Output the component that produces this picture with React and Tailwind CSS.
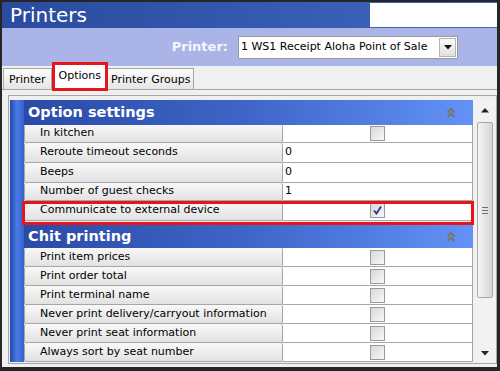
import React from 'react';

const optionRows = [
  { label: 'In kitchen', type: 'check', h: 'h-[18px]' },
  { label: 'Reroute timeout seconds', type: 'text', value: '0', h: 'h-[20px]' },
  { label: 'Beeps', type: 'text', value: '0', h: 'h-[20px]' },
  { label: 'Number of guest checks', type: 'text', value: '1', h: 'h-[18px]' },
];

const chitRows = [
  'Print item prices',
  'Print order total',
  'Print terminal name',
  'Never print delivery/carryout information',
  'Never print seat information',
  'Always sort by seat number',
];

const CheckBox = ({ checked }) => (
  <div className="w-[15px] h-[15px] border border-[#9a9a9a] bg-gradient-to-br from-[#d8d8d8] to-[#f8f8f8] flex items-center justify-center">
    {checked && (
      <svg width="11" height="11" viewBox="0 0 11 11">
        <path d="M2 5.5 L4.5 8.5 L9 1.5" fill="none" stroke="#23358f" strokeWidth="1.8" />
      </svg>
    )}
  </div>
);

const Row = ({ label, type, value, h }) => (
  <div className={`flex ${h}`}>
    <div className="w-[259px] flex items-center pl-[15px] bg-gradient-to-b from-[#f8f8f8] to-[#e2e2e2] border-b border-r border-l border-[#a6a6a6] rounded-[2px] text-[11px] text-black">
      {label}
    </div>
    <div className="flex-1 flex items-center bg-white border-b border-r border-[#a6a6a6]">
      {type === 'check' ? (
        <div className="flex-1 flex justify-center">
          <CheckBox checked={value} />
        </div>
      ) : (
        <span className="pl-[2px] text-[11px] text-black">{value}</span>
      )}
    </div>
  </div>
);

const SectionHeader = ({ title, h }) => (
  <div className={`${h} flex items-center justify-between pl-[4px] pr-[16px] bg-gradient-to-r from-[#2b4aa6] via-[#3e66c8] to-[#6392f6]`}>
    <span className="text-white font-bold text-[14.5px]">{title}</span>
    <svg width="12" height="12" viewBox="0 0 12 12">
      <path d="M2.5 5.5 L6 2 L9.5 5.5 M2.5 10 L6 6.5 L9.5 10" fill="none" stroke="#7a7458" strokeWidth="1.8" />
    </svg>
  </div>
);

const App = () => {
  return (
    <div
      className="w-[500px] h-[371px] border-l-2 border-t-2 border-r-[3px] border-b-[4px] border-[#262626] bg-[#f0f0f0] flex flex-col overflow-hidden"
      style={{ fontFamily: '"DejaVu Sans", Verdana, sans-serif' }}
    >
      {/* Title bar */}
      <div className="h-[26px] flex bg-gradient-to-r from-[#2a4b9e] to-[#3f67c2]">
        <div className="flex-1 flex items-center pl-[8px] text-white text-[20px] leading-none">Printers</div>
        <div className="w-[127px] bg-white my-[1px] ml-[1px]" />
      </div>

      {/* Printer selector */}
      <div className="h-[38px] bg-[#aab4e6] flex items-center justify-end pr-[39px] gap-[10px]">
        <span className="text-[#f6f6ff] font-bold text-[13px]">Printer:</span>
        <div className="w-[220px] h-[23px] bg-white border border-[#9a9a9a] flex items-center">
          <span className="flex-1 pl-[2px] text-[11px] text-black whitespace-nowrap">1 WS1 Receipt Aloha Point of Sale</span>
          <div className="w-[17px] h-[19px] mr-[1px] bg-gradient-to-b from-[#fafafa] to-[#e0e0e0] border border-[#b4b4b4] flex items-center justify-center">
            <svg width="8" height="5" viewBox="0 0 8 5"><path d="M0 0 H8 L4 4.5 Z" fill="#111" /></svg>
          </div>
        </div>
      </div>

      {/* Tabs */}
      <div className="h-[24px] flex items-end pl-[1px] border-b border-[#a6a6a6] bg-[#f0f0f0]">
        <div className="h-[21px] px-[5px] pt-[3px] flex items-center border border-b-0 border-[#a6a6a6] bg-gradient-to-b from-[#fbfbfb] to-[#e6e6e6] text-[11px] text-black">
          Printer
        </div>
        <div className="relative z-10 h-[29px] -mb-[2px] px-[4px] pb-[1px] flex items-center border-[3px] border-[#e8141b] bg-white text-[11px] text-black">
          Options
        </div>
        <div className="h-[21px] px-[3px] pt-[3px] flex items-center border border-b-0 border-l-0 border-[#a6a6a6] bg-gradient-to-b from-[#fbfbfb] to-[#e6e6e6] text-[11px] text-black">
          Printer Groups
        </div>
      </div>

      {/* Content */}
      <div className="flex-1 pt-[5px] pl-[6px] pb-[3px]">
        <div className="h-full border border-[#a6a6a6] pt-[4px] pl-[1px] pb-[1px] flex">
          {/* left stripe */}
          <div className="w-[14px] bg-gradient-to-r from-[#2548b0] via-[#4a7ce6] to-[#3560cc]" />

          {/* grid */}
          <div className="w-[449px] flex flex-col">
            <SectionHeader title="Option settings" h="h-[25px]" />
            {optionRows.map((r) => (
              <Row key={r.label} {...r} />
            ))}
            <div className="relative">
              <Row label="Communicate to external device" type="check" value={true} h="h-[20px]" />
              <div className="absolute -left-[2px] -right-[1px] top-0 -bottom-[4px] border-[3px] border-[#e8141b] pointer-events-none" />
            </div>
            <div className="h-[4px]" />
            <SectionHeader title="Chit printing" h="h-[23px]" />
            {chitRows.map((label) => (
              <Row key={label} label={label} type="check" h="h-[19px]" />
            ))}
          </div>

          {/* scrollbar */}
          <div className="w-[20px] ml-[2px] flex flex-col bg-[#f2f2f2]">
            <div className="h-[20px] flex items-center justify-center">
              <svg width="8" height="5" viewBox="0 0 8 5"><path d="M0 4.5 H8 L4 0 Z" fill="#222" /></svg>
            </div>
            <div className="h-[176px] mx-[2px] mt-[2px] rounded-[2px] border border-[#a8a8a8] bg-gradient-to-r from-[#f4f4f4] to-[#d6d6d6] flex flex-col items-center justify-center gap-[2px]">
              <div className="w-[6px] h-px bg-[#707070]" />
              <div className="w-[6px] h-px bg-[#707070]" />
              <div className="w-[6px] h-px bg-[#707070]" />
            </div>
            <div className="flex-1" />
            <div className="h-[18px] flex items-center justify-center">
              <svg width="8" height="5" viewBox="0 0 8 5"><path d="M0 0 H8 L4 4.5 Z" fill="#222" /></svg>
            </div>
          </div>
        </div>
      </div>
    </div>
  );
};

export default App;
